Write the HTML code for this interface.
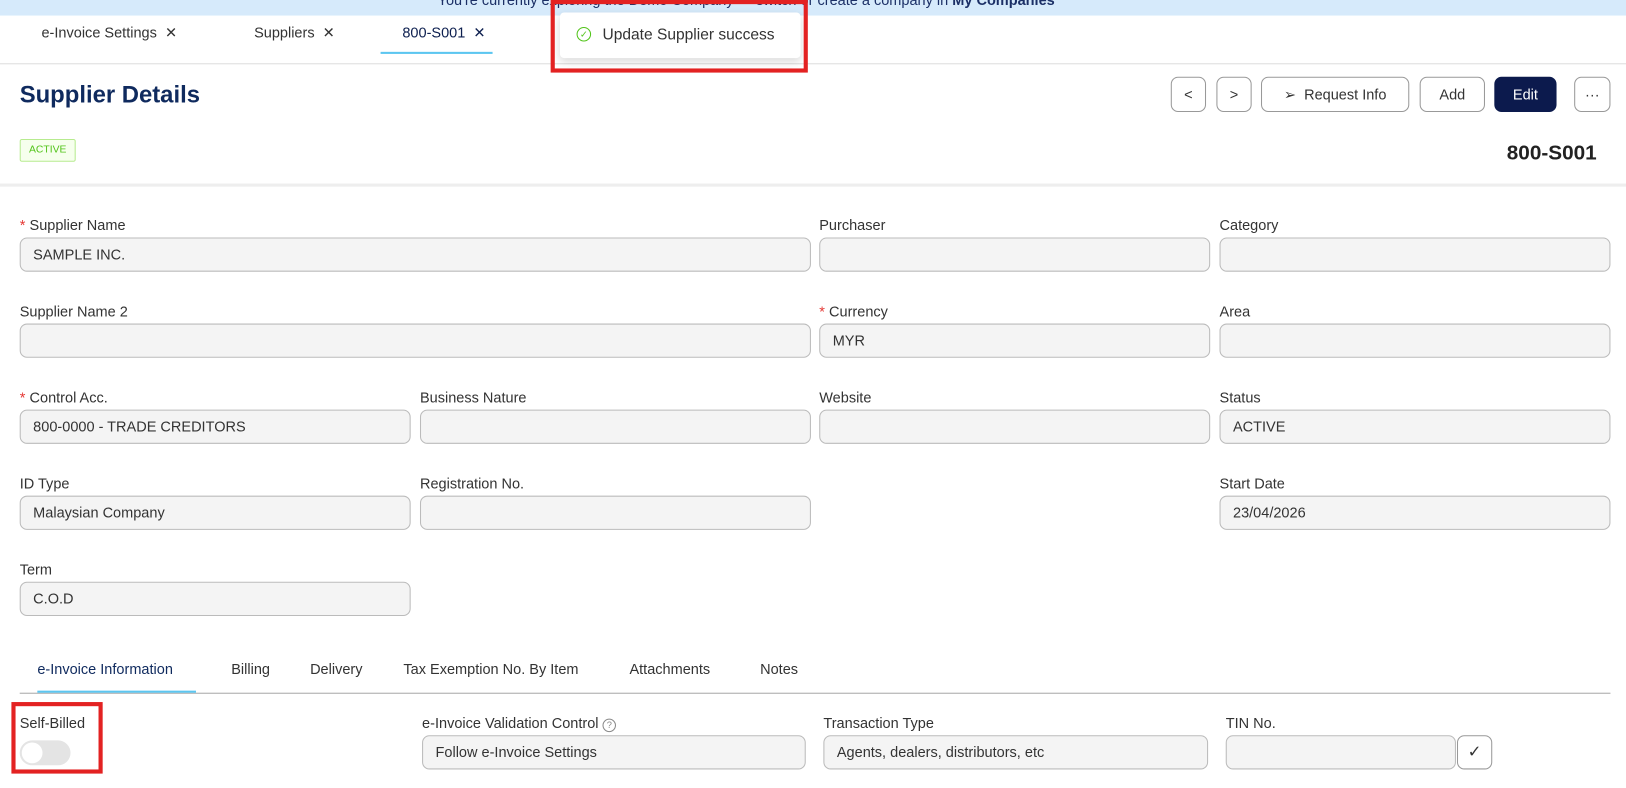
<!DOCTYPE html>
<html><head><style>
html,body{margin:0;width:1626px;height:788px;overflow:hidden;background:#fff}
#w{position:absolute;left:0;top:0;width:1568px;height:760px;transform:scale(1.037);transform-origin:0 0;font-family:"Liberation Sans",sans-serif;color:#333}
.a{position:absolute}
.lbl{position:absolute;font-size:14px;color:#333}
.inp{position:absolute;height:33px;border:1px solid #bbb;border-radius:7px;background:#f4f4f4;box-sizing:border-box;font-size:14px;padding:0 12px;line-height:31px;color:#333}
.req{color:#e53935;margin-right:4px}
.btn{position:absolute;top:74px;height:34px;border:1px solid #999;border-radius:7px;box-sizing:border-box;font-size:14px;text-align:center;line-height:32px;background:#fff;color:#333}
.tab{position:absolute;font-size:14px;color:#333}
</style></head><body><div id="w">
<div class="a" style="left:0;top:0;width:1568px;height:15px;background:#d6eafb;overflow:hidden"><div class="a" style="left:422px;top:-8px;font-size:14px;color:#1b2f66;white-space:nowrap">You're currently exploring the Demo Company — switch or create a company in <b>My Companies</b></div></div>
<div class="tab" style="left:40px;top:23px;color:#333">e-Invoice Settings &nbsp;✕</div>
<div class="tab" style="left:245px;top:23px">Suppliers &nbsp;✕</div>
<div class="tab" style="left:388px;top:23px;color:#0d1f4f">800-S001 &nbsp;✕</div>
<div class="a" style="left:367px;top:50px;width:108px;height:2px;background:#5cc6f0"></div>
<div class="a" style="left:0;top:61px;width:1568px;height:1px;background:#ddd"></div>
<div class="a" style="left:540px;top:12px;width:232px;height:44px;background:#fff;box-shadow:0 3px 8px rgba(0,0,0,.15);border-radius:4px"></div>
<div class="a" style="left:556px;top:26px;width:12px;height:12px;border:1.5px solid #52c41a;border-radius:50%;font-size:9px;color:#52c41a;text-align:center;line-height:12px">✓</div>
<div class="a" style="left:581px;top:25px;font-size:15px;color:#333">Update Supplier success</div>
<div class="a" style="left:531px;top:0;width:240px;height:62px;border:4px solid #e32222"></div>
<div class="a" style="left:19px;top:78px;font-size:23px;font-weight:bold;color:#0f2a5e">Supplier Details</div>
<div class="a" style="left:19px;top:134px;width:52px;height:20px;border:1px solid #b7eb8f;background:#f6ffed;color:#52c41a;font-size:10px;text-align:center;line-height:20px;border-radius:2px">ACTIVE</div>
<div class="btn" style="left:1129px;width:34px">&lt;</div>
<div class="btn" style="left:1173px;width:34px">&gt;</div>
<div class="btn" style="left:1216px;width:143px">➢&nbsp; Request Info</div>
<div class="btn" style="left:1369px;width:63px">Add</div>
<div class="btn" style="left:1441px;width:60px;background:#0c1a4d;color:#fff;border-color:#0c1a4d">Edit</div>
<div class="btn" style="left:1518px;width:35px">···</div>
<div class="a" style="left:1453px;top:137px;font-size:20px;font-weight:bold;color:#222">800-S001</div>
<div class="a" style="left:0;top:177px;width:1568px;height:3px;background:#eee"></div>

<div class="lbl" style="left:19px;top:209px"><span class="req">*</span>Supplier Name</div>
<div class="inp" style="left:19px;top:229px;width:763px">SAMPLE INC.</div>
<div class="lbl" style="left:790px;top:209px">Purchaser</div>
<div class="inp" style="left:790px;top:229px;width:377px"></div>
<div class="lbl" style="left:1176px;top:209px">Category</div>
<div class="inp" style="left:1176px;top:229px;width:377px"></div>

<div class="lbl" style="left:19px;top:292px">Supplier Name 2</div>
<div class="inp" style="left:19px;top:312px;width:763px"></div>
<div class="lbl" style="left:790px;top:292px"><span class="req">*</span>Currency</div>
<div class="inp" style="left:790px;top:312px;width:377px">MYR</div>
<div class="lbl" style="left:1176px;top:292px">Area</div>
<div class="inp" style="left:1176px;top:312px;width:377px"></div>

<div class="lbl" style="left:19px;top:375px"><span class="req">*</span>Control Acc.</div>
<div class="inp" style="left:19px;top:395px;width:377px">800-0000 - TRADE CREDITORS</div>
<div class="lbl" style="left:405px;top:375px">Business Nature</div>
<div class="inp" style="left:405px;top:395px;width:377px"></div>
<div class="lbl" style="left:790px;top:375px">Website</div>
<div class="inp" style="left:790px;top:395px;width:377px"></div>
<div class="lbl" style="left:1176px;top:375px">Status</div>
<div class="inp" style="left:1176px;top:395px;width:377px">ACTIVE</div>

<div class="lbl" style="left:19px;top:458px">ID Type</div>
<div class="inp" style="left:19px;top:478px;width:377px">Malaysian Company</div>
<div class="lbl" style="left:405px;top:458px">Registration No.</div>
<div class="inp" style="left:405px;top:478px;width:377px"></div>
<div class="lbl" style="left:1176px;top:458px">Start Date</div>
<div class="inp" style="left:1176px;top:478px;width:377px">23/04/2026</div>

<div class="lbl" style="left:19px;top:541px">Term</div>
<div class="inp" style="left:19px;top:561px;width:377px">C.O.D</div>

<div class="tab" style="left:36px;top:637px;color:#0f2a5e">e-Invoice Information</div>
<div class="tab" style="left:223px;top:637px">Billing</div>
<div class="tab" style="left:299px;top:637px">Delivery</div>
<div class="tab" style="left:389px;top:637px">Tax Exemption No. By Item</div>
<div class="tab" style="left:607px;top:637px">Attachments</div>
<div class="tab" style="left:733px;top:637px">Notes</div>
<div class="a" style="left:19px;top:668px;width:1534px;height:1px;background:#aaa"></div>
<div class="a" style="left:36px;top:666px;width:153px;height:2px;background:#5cc6f0"></div>

<div class="lbl" style="left:19px;top:689px">Self-Billed</div>
<div class="a" style="left:19px;top:714px;width:49px;height:24px;border-radius:12px;background:#e4e4e4"></div>
<div class="a" style="left:21px;top:716px;width:20px;height:20px;border-radius:50%;background:#fff"></div>
<div class="a" style="left:11px;top:677px;width:80px;height:61px;border:4px solid #e32222"></div>

<div class="lbl" style="left:407px;top:689px">e-Invoice Validation Control <span style="display:inline-block;width:11px;height:11px;border:1px solid #888;border-radius:50%;font-size:9px;text-align:center;line-height:11px;color:#888">?</span></div>
<div class="inp" style="left:407px;top:709px;width:370px">Follow e-Invoice Settings</div>
<div class="lbl" style="left:794px;top:689px">Transaction Type</div>
<div class="inp" style="left:794px;top:709px;width:371px">Agents, dealers, distributors, etc</div>
<div class="lbl" style="left:1182px;top:689px">TIN No.</div>
<div class="inp" style="left:1182px;top:709px;width:222px"></div>
<div class="inp" style="left:1405px;top:709px;width:34px;background:#fff;border-color:#999;text-align:center;padding:0;font-size:16px">✓</div>
</div></body></html>
